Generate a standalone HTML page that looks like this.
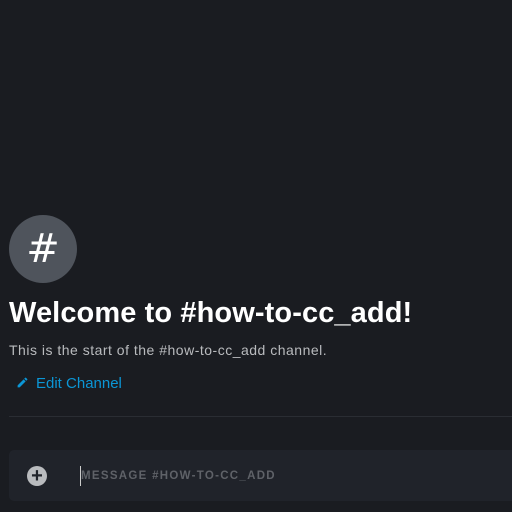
<!DOCTYPE html>
<html><head><style>
body{margin:0;width:512px;height:512px;background:#1a1c21;overflow:hidden;font-family:"Liberation Sans",sans-serif;position:relative}
.av{position:absolute;left:9px;top:215px;width:68px;height:68px;border-radius:50%;background:#4f545c;color:#fff;font-family:"DejaVu Sans",sans-serif;font-size:40px;text-align:center;line-height:68px}
h1{position:absolute;left:9px;top:297px;margin:0;font-size:29px;font-weight:bold;color:#fff;letter-spacing:0.1px;white-space:nowrap}
.sub{position:absolute;left:9px;top:342px;font-size:14px;color:#b9bbbe;letter-spacing:0.5px;white-space:nowrap}
.edit{position:absolute;left:16px;top:375px;font-size:15px;color:#0b96d6;white-space:nowrap}
.hr{position:absolute;left:9px;right:0;top:416px;height:1px;background:#2a2d33}
.box{position:absolute;left:9px;top:450px;width:510px;height:51px;border-radius:5px;background:#20232a}
.plus{position:absolute;left:27px;top:466px;width:20px;height:20px;border-radius:50%;background:#b9bbbe;color:#20232a;font-weight:bold;font-size:20px;line-height:20px;text-align:center}
.ph{position:absolute;left:81px;top:470px;font-size:11.5px;font-weight:bold;letter-spacing:1.3px;color:#5f6268;white-space:nowrap}
.caret{position:absolute;left:80px;top:466px;width:1px;height:20px;background:#ccc}
</style></head><body>
<div class="av">#</div>
<h1>Welcome to #how-to-cc_add!</h1>
<div class="sub">This is the start of the #how-to-cc_add channel.</div>
<div class="edit"><svg width="13" height="13" viewBox="0 0 24 24" style="vertical-align:-1px;margin-right:7px"><path fill="#0b96d6" d="M3 17.25V21h3.75L17.81 9.94l-3.75-3.75zM20.71 7.04a1 1 0 000-1.41l-2.34-2.34a1 1 0 00-1.41 0l-1.83 1.83 3.75 3.75z"/></svg>Edit Channel</div>
<div class="hr"></div>
<div class="box"></div>
<div class="plus">+</div>
<div class="caret"></div>
<div class="ph">MESSAGE #HOW-TO-CC_ADD</div>
</body></html>
